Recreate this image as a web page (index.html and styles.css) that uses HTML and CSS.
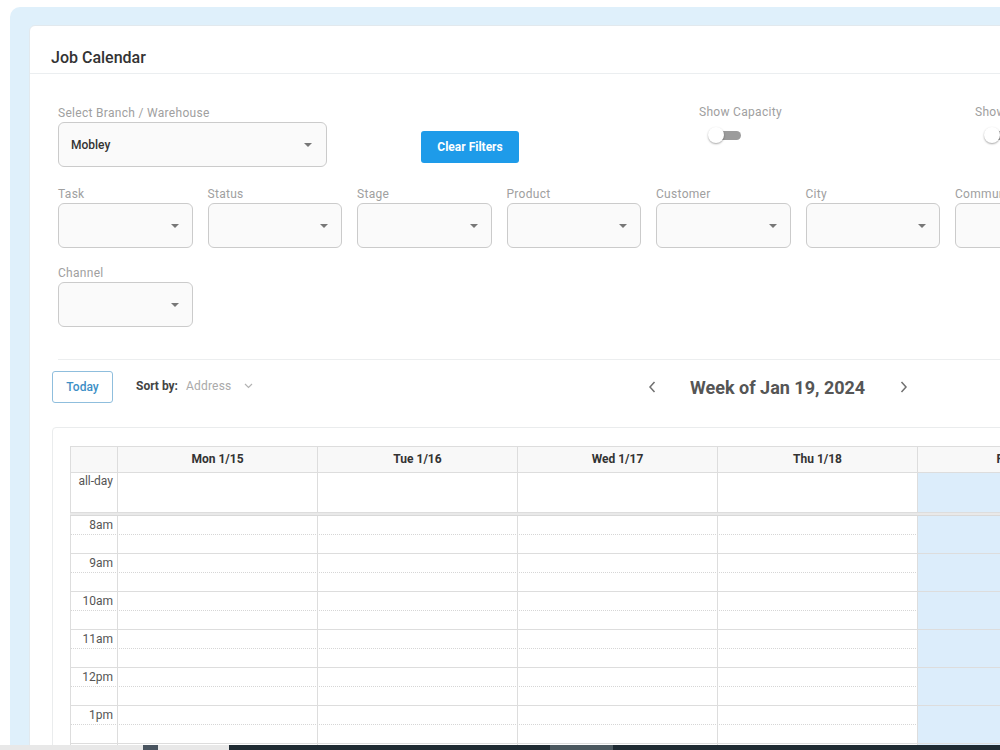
FILE: index.html
```html
<!DOCTYPE html>
<html lang="en">
<head>
<meta charset="utf-8">
<title>Job Calendar</title>
<link rel="stylesheet" href="styles.css">
</head>
<body>
<div class="shell">
  <div class="card">
    <div class="card-head">Job Calendar</div>
    <div class="card-body">
      <div class="filters">
        <div class="row1">
          <div class="field branch">
            <label class="lbl">Select Branch / Warehouse</label>
            <div class="select"><span class="val">Mobley</span><i class="caret"></i></div>
          </div>
          <button class="btn-clear">Clear Filters</button>
          <div class="toggle-field">
            <span class="lbl">Show Capacity</span>
            <span class="switch"><span class="track"></span><span class="knob"></span></span>
          </div>
          <div class="toggle-field second">
            <span class="lbl">Show Weekends</span>
            <span class="switch"><span class="track"></span><span class="knob"></span></span>
          </div>
        </div>
        <div class="grid">
          <div class="field"><label class="lbl">Task</label><div class="select"><span></span><i class="caret"></i></div></div>
          <div class="field"><label class="lbl">Status</label><div class="select"><span></span><i class="caret"></i></div></div>
          <div class="field"><label class="lbl">Stage</label><div class="select"><span></span><i class="caret"></i></div></div>
          <div class="field"><label class="lbl">Product</label><div class="select"><span></span><i class="caret"></i></div></div>
          <div class="field"><label class="lbl">Customer</label><div class="select"><span></span><i class="caret"></i></div></div>
          <div class="field"><label class="lbl">City</label><div class="select"><span></span><i class="caret"></i></div></div>
          <div class="field"><label class="lbl">Community</label><div class="select"><span></span><i class="caret"></i></div></div>
          <div class="field"><label class="lbl">Builder</label><div class="select"><span></span><i class="caret"></i></div></div>
          <div class="field"><label class="lbl">Channel</label><div class="select"><span></span><i class="caret"></i></div></div>
        </div>
      </div>
      <div class="divider"></div>
      <div class="toolbar">
        <button class="btn-today">Today</button>
        <div class="sort">
          <span class="sort-lbl">Sort by:</span>
          <span class="sort-val">Address</span>
          <svg class="sort-chev" width="9" height="6" viewBox="0 0 9 6"><path d="M1 1l3.5 3.5L8 1" fill="none" stroke="#b3b3b3" stroke-width="1.2"/></svg>
        </div>
        <div class="week-nav">
          <svg class="nav-chev" width="10" height="14" viewBox="0 0 10 14"><path d="M7.5 2L3 7l4.5 5" fill="none" stroke="#707070" stroke-width="1.5"/></svg>
          <span class="week-title">Week of Jan 19, 2024</span>
          <svg class="nav-chev next" width="10" height="14" viewBox="0 0 10 14"><path d="M2.5 2L7 7l-4.5 5" fill="none" stroke="#707070" stroke-width="1.5"/></svg>
        </div>
      </div>
      <div class="cal-box">
        <div class="cal">
          <div class="row head">
            <div></div><div>Mon 1/15</div><div>Tue 1/16</div><div>Wed 1/17</div><div>Thu 1/18</div><div>Fri 1/19</div><div>Sat 1/20</div><div>Sun 1/21</div>
          </div>
          <div class="row allday">
            <div class="ax">all-day</div><div></div><div></div><div></div><div></div><div class="today"></div><div></div><div></div>
          </div>
          <div class="sep"></div>
          <div class="row half"><div class="ax">8am</div><div></div><div></div><div></div><div></div><div class="today"></div><div></div><div></div></div>
          <div class="row full"><div class="ax"></div><div></div><div></div><div></div><div></div><div class="today"></div><div></div><div></div></div>
          <div class="row half"><div class="ax">9am</div><div></div><div></div><div></div><div></div><div class="today"></div><div></div><div></div></div>
          <div class="row full"><div class="ax"></div><div></div><div></div><div></div><div></div><div class="today"></div><div></div><div></div></div>
          <div class="row half"><div class="ax">10am</div><div></div><div></div><div></div><div></div><div class="today"></div><div></div><div></div></div>
          <div class="row full"><div class="ax"></div><div></div><div></div><div></div><div></div><div class="today"></div><div></div><div></div></div>
          <div class="row half"><div class="ax">11am</div><div></div><div></div><div></div><div></div><div class="today"></div><div></div><div></div></div>
          <div class="row full"><div class="ax"></div><div></div><div></div><div></div><div></div><div class="today"></div><div></div><div></div></div>
          <div class="row half"><div class="ax">12pm</div><div></div><div></div><div></div><div></div><div class="today"></div><div></div><div></div></div>
          <div class="row full"><div class="ax"></div><div></div><div></div><div></div><div></div><div class="today"></div><div></div><div></div></div>
          <div class="row half"><div class="ax">1pm</div><div></div><div></div><div></div><div></div><div class="today"></div><div></div><div></div></div>
          <div class="row full"><div class="ax"></div><div></div><div></div><div></div><div></div><div class="today"></div><div></div><div></div></div>
          <div class="row half"><div class="ax">2pm</div><div></div><div></div><div></div><div></div><div class="today"></div><div></div><div></div></div>
          <div class="row full"><div class="ax"></div><div></div><div></div><div></div><div></div><div class="today"></div><div></div><div></div></div>
        </div>
      </div>
    </div>
  </div>
</div>
<div class="taskbar">
  <div class="tb-left"><span class="tb-icon"></span></div>
  <div class="tb-right"><span class="tb-active"></span></div>
</div>
</body>
</html>
```
FILE: styles.css
```css
html, body {
  margin: 0;
  padding: 0;
  overflow: hidden;
  background: #fff;
  font-family: Roboto, "Liberation Sans", Arial, sans-serif;
}
body {
  width: 1000px;
  height: 750px;
}
.shell {
  margin: 7px 0 0 10px;
  width: 1500px;
  height: 900px;
  background: #dff0fb;
  border-radius: 10px;
  padding: 18px 0 0 19px;
  box-sizing: border-box;
}
.card {
  background: #fff;
  border: 1px solid #e2e9ee;
  border-radius: 6px;
  width: 1470px;
  height: 880px;
}
.card-head {
  padding: 23px 21px 6px;
  line-height: 18px;
  font-size: 16px;
  font-weight: 500;
  color: #333;
  border-bottom: 1px solid #ebeef0;
}
.card-body {
  padding-left: 22px;
}
.filters {
  padding: 32px 0 0 6px;
}
.row1 {
  display: flex;
  align-items: flex-start;
  margin-bottom: 20px;
}
.lbl {
  display: block;
  font-size: 12px;
  line-height: 14px;
  letter-spacing: 0.3px;
  color: #a0a0a0;
  margin-bottom: 2px;
  white-space: nowrap;
}
.select {
  height: 45px;
  box-sizing: border-box;
  border: 1px solid #cbcbcb;
  border-radius: 6px;
  background: #fafafa;
  display: flex;
  align-items: center;
  justify-content: space-between;
  padding: 0 13px 0 12px;
}
.val {
  font-size: 12px;
  font-weight: 500;
  color: #333;
}
.caret {
  width: 0;
  height: 0;
  border-left: 4px solid transparent;
  border-right: 4px solid transparent;
  border-top: 4px solid #777;
}
.branch {
  width: 269px;
  flex-shrink: 0;
}
.branch .select .caret {
  margin-right: 1px;
}
.btn-clear {
  margin: 25px 0 0 94px;
  width: 98px;
  height: 32px;
  flex-shrink: 0;
  background: #1e9be9;
  color: #fff;
  border: 0;
  border-radius: 3px;
  font-family: inherit;
  font-size: 12px;
  font-weight: 700;
  padding: 0;
}
.toggle-field {
  margin-left: 180px;
  width: 100px;
  flex-shrink: 0;
  margin-top: -1px;
}
.toggle-field.second {
  margin-left: 176px;
}
.switch {
  position: relative;
  display: block;
  width: 34px;
  height: 17px;
  margin: 8px 0 0 9px;
}
.track {
  position: absolute;
  left: 6px;
  top: 4px;
  width: 27px;
  height: 9px;
  border-radius: 5px;
  background: #9c9c9c;
}
.knob {
  position: absolute;
  left: 0;
  top: 0;
  width: 16px;
  height: 16px;
  border-radius: 50%;
  background: #fff;
  box-shadow: 0 1px 2px rgba(0,0,0,0.35);
}
.grid {
  display: grid;
  grid-template-columns: repeat(8, 134.5px);
  column-gap: 15px;
  row-gap: 18px;
}
.divider {
  margin: 32px 0 0 6px;
  height: 1px;
  background: #eceeef;
}
.toolbar {
  margin-top: 11px;
  display: flex;
  align-items: center;
  height: 32px;
}
.btn-today {
  width: 61px;
  height: 32px;
  box-sizing: border-box;
  background: #fff;
  border: 1px solid #8fbedd;
  border-radius: 3px;
  color: #3d8fc6;
  font-family: inherit;
  font-size: 12px;
  font-weight: 500;
  padding: 0;
}
.sort {
  margin-left: 23px;
  width: 511px;
  display: flex;
  align-items: center;
  font-size: 12px;
  margin-top: -2px;
}
.sort-lbl {
  font-weight: 700;
  color: #444;
}
.sort-val {
  color: #aaa;
  margin-left: 8px;
  letter-spacing: 0.2px;
}
.sort-chev {
  margin-left: 13px;
}
.week-nav {
  display: flex;
  align-items: center;
}
.week-title {
  margin-left: 33px;
  font-size: 18px;
  font-weight: 700;
  color: #555;
}
.nav-chev.next {
  margin-left: 34px;
}
.cal-box {
  margin-top: 24px;
  border: 1px solid #eaeced;
  border-radius: 4px;
  padding: 18px 0 0 17px;
  height: 500px;
}
.cal {
  width: 1448px;
  border-top: 1px solid #ddd;
}
.row {
  display: grid;
  grid-template-columns: 47px repeat(7, 200px);
  box-sizing: border-box;
  border-bottom: 1px solid #ddd;
}
.row > div {
  border-left: 1px solid #ddd;
}
.head {
  height: 26px;
  background: #f8f8f8;
}
.head > div {
  font-size: 12px;
  font-weight: 700;
  color: #333;
  text-align: center;
  line-height: 25px;
}
.allday {
  height: 40px;
}
.ax {
  font-size: 12px;
  color: #555;
  text-align: right;
  padding-right: 4px;
}
.allday .ax {
  padding-top: 1px;
  line-height: 14px;
}
.sep {
  height: 3px;
  background: #e9e9e9;
  border-bottom: 1px solid #d9d9d9;
  box-sizing: border-box;
}
.half {
  height: 19px;
  border-bottom: 1px dotted #d6d6d6;
}
.half .ax {
  line-height: 19px;
}
.full {
  height: 19px;
}
.today {
  background: #dcedfb;
}
.taskbar {
  position: fixed;
  left: 0;
  bottom: 0;
  width: 1000px;
  height: 5px;
  display: flex;
}
.tb-left {
  width: 229px;
  background: #e8e8e8;
  position: relative;
}
.tb-icon {
  position: absolute;
  left: 143px;
  top: 0;
  width: 15px;
  height: 5px;
  background: #4a5560;
}
.tb-right {
  flex: 1;
  background: #1f2b33;
  position: relative;
}
.tb-active {
  position: absolute;
  left: 321px;
  top: 0;
  width: 63px;
  height: 5px;
  background: #4b585f;
}
```
